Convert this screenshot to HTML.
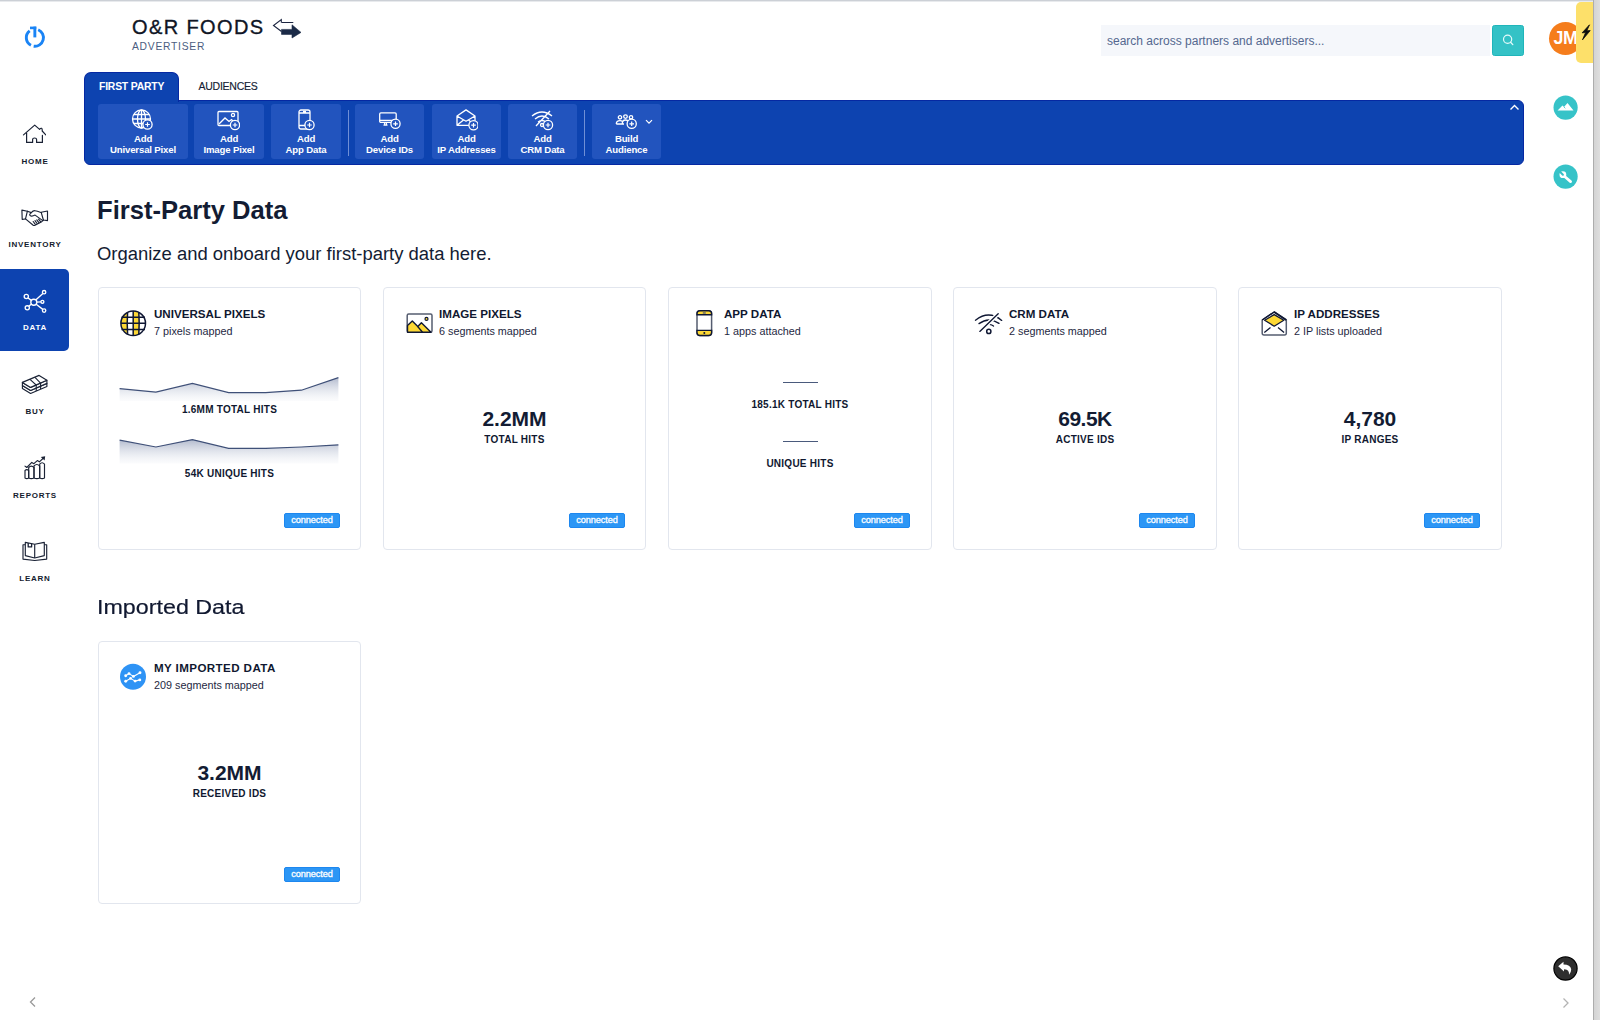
<!DOCTYPE html>
<html><head><meta charset="utf-8">
<style>
*{box-sizing:border-box;margin:0;padding:0}
html,body{width:1600px;height:1020px;overflow:hidden;background:#fff;font-family:"Liberation Sans",sans-serif;color:#131c33}
.abs{position:absolute}
#topline{left:0;top:0;width:1600px;height:2px;background:linear-gradient(#ccd0d6 0,#ccd0d6 1px,#e8eaed 1px)}
#rbar{left:1593px;top:0;width:7px;height:1020px;background:linear-gradient(90deg,#d4d4d4,#dedede);border-left:1px solid #adadad}
.nav{left:0;width:69px;text-align:center;font-size:8px;font-weight:bold;letter-spacing:1.3px;color:#1a2235}
.navlbl{position:absolute;left:0;width:69px;text-align:center;font-size:8px;font-weight:bold;letter-spacing:0.75px;color:#141b2e;padding-left:1px}
#brand{left:132px;top:16px;font-size:20px;letter-spacing:1.4px;color:#0f1525;-webkit-text-stroke:0.35px #0f1525}
#adv{left:132px;top:41px;font-size:10.3px;letter-spacing:0.75px;color:#4b5d7f}
#search{left:1101px;top:25px;width:389px;height:31px;background:#f5f7fb;font-size:12px;color:#54688f;padding:8.5px 0 0 6px}
#sbtn{left:1492px;top:25px;width:31px;height:31px;background:#34bfc4}
#tab1{left:84px;top:72px;width:95px;height:30px;background:#0d43b0;border:1px solid #0528a2;border-bottom:none;border-radius:7px 7px 0 0;color:#fff;font-size:10.4px;font-weight:bold;padding:8px 0 0 14px;letter-spacing:-0.2px}
#tab2{left:198.5px;top:80px;font-size:10.5px;color:#141c33;letter-spacing:-0.25px;-webkit-text-stroke:0.15px #141c33}
#bar{left:84px;top:100px;width:1440px;height:65px;background:#0d43b0;border:1px solid #0528a2;border-radius:0 6px 6px 6px}
.btn{position:absolute;top:104px;height:55px;background:#2254be;border-radius:3px;color:#fff;font-size:9.6px;font-weight:bold;text-align:center;line-height:10.7px;letter-spacing:-0.15px}
.btn .t{position:absolute;left:0;right:0;top:30px}
.sep{position:absolute;top:110px;width:1px;height:46px;background:#6f8fd6}
h1{position:absolute;left:97px;top:196px;font-size:25.6px;font-weight:bold;color:#131c33}
#sub{left:97px;top:243px;font-size:18.45px;color:#131c33}
h2{position:absolute;left:97px;top:595px;font-size:20.5px;font-weight:normal;color:#101830;transform:scaleX(1.135);transform-origin:0 0;-webkit-text-stroke:0.2px #101830}
.card{position:absolute;width:263px;height:263px;border:1px solid #e2e6ee;border-radius:4px;background:#fff}
.ct{position:absolute;left:55px;top:19px;font-size:11.6px;font-weight:bold;color:#101830;letter-spacing:0px}
.cs{position:absolute;left:55px;top:37px;font-size:10.8px;color:#1e2842}
.big{position:absolute;left:0;right:0;text-align:center;font-size:21px;font-weight:bold;color:#131c33}
.lbl{position:absolute;left:0;right:0;text-align:center;font-size:10px;font-weight:bold;color:#101830;letter-spacing:0.25px}
.conn{position:absolute;left:185px;top:225px;width:56px;height:15px;background:#2c96f5;border:1px solid #1d87ef;color:#fff;font-size:9.2px;font-weight:normal;-webkit-text-stroke:0.3px #fff;letter-spacing:-0.1px;text-align:center;line-height:13px;border-radius:2px}
</style></head><body>
<div id="topline" class="abs"></div>
<div id="rbar" class="abs"></div>


<!-- sidebar -->
<svg class="abs" style="left:22px;top:24px" width="26" height="26" viewBox="0 0 26 26">
<g fill="none" stroke="#1a84f5" stroke-width="2.9">
<path d="M7.7 6.86 A8.6 8.6 0 0 0 8.94 21.33"/>
<path d="M16.2 5.76 A8.6 8.6 0 0 1 11.67 22.2"/>
</g>
<rect x="11.4" y="2.6" width="2.9" height="10.8" fill="#1a84f5"/>
<rect x="8" y="2.6" width="6.3" height="2.6" fill="#1a84f5"/>
</svg>
<svg class="abs" style="left:22px;top:123px" width="24" height="21" viewBox="0 0 24 21">
<g fill="none" stroke="#1a2235" stroke-width="1.2" stroke-linejoin="round" stroke-linecap="round">
<path d="M1.5 11.9 L12.7 2.1 L17.6 6.4 Q18.5 5 19.6 5.3 Q20.4 5.8 20.2 8 L23.8 11.9"/>
<path d="M4.6 10 V19.4 H10.6 V16.6 Q10.6 15 12.6 15 Q14.6 15 14.6 16.6 V19.4 H20.4 V12.4"/>
</g></svg>
<div class="navlbl" style="top:157px">HOME</div>
<svg class="abs" style="left:20px;top:208px" width="30" height="20" viewBox="0 0 30 20">
<g fill="none" stroke="#1a2235" stroke-width="1.15" stroke-linejoin="round" stroke-linecap="round">
<path d="M1.9 2.1 L7.4 3.2 L5.5 10.9 L2.2 11.5 Z"/>
<path d="M21.2 4.3 L27.5 3 V12.6 L23.4 12 Z"/>
<path d="M7.4 3.2 L11.3 4.6 Q13 2.6 14.9 2.7 Q17 3 20.9 4.5"/>
<path d="M5.5 10.9 L13.2 17.2 Q14 17.8 15 17.3 L21.7 13.7 L23.4 12"/>
<path d="M11.3 4.6 Q9 6.3 10 7.4 Q11.5 9 15.1 7.1 L22.8 12.6"/>
<path d="M13.2 13.5 L15.3 16.3 M15.0 12.7 L17.1 15.5 M16.8 11.9 L18.9 14.7 M18.6 11.1 L20.7 13.9"/>
</g></svg>
<div class="navlbl" style="top:240px">INVENTORY</div>
<div class="abs" style="left:0;top:269px;width:69px;height:82px;background:#0d43b0;border-radius:0 5px 5px 0"></div>
<svg class="abs" style="left:22px;top:289px" width="26" height="25" viewBox="0 0 26 25">
<g fill="none" stroke="#fff" stroke-width="1.35">
<circle cx="11.8" cy="13.2" r="3"/><circle cx="4.3" cy="7.5" r="2.1"/><circle cx="5.3" cy="18.8" r="2.1"/><circle cx="22.1" cy="3.2" r="1.7"/><circle cx="20.4" cy="12.8" r="1.5"/><circle cx="22.1" cy="21.6" r="1.7"/>
<path d="M6 9 L9.4 11.4 M6.8 17.3 L9.5 15.1 M20.9 4.5 L14 10.8 M18.9 12.9 L14.8 13.1 M20.8 20.4 L14.2 15.2"/>
</g></svg>
<div class="navlbl" style="top:323px;color:#fff">DATA</div>
<svg class="abs" style="left:20px;top:373px" width="29" height="24" viewBox="0 0 29 24">
<g fill="#fff" stroke="#1a2235" stroke-width="1.15" stroke-linejoin="round">
<path d="M2.4 15.5 L10.6 20.5 L26.9 13.5 L26.9 10.4 L10.6 17.5 L2.4 12.5 Z"/>
<path d="M2.4 12.5 L10.6 17.5 L26.9 10.4 L26.9 7.3 L10.6 14.4 L2.4 9.4 Z"/>
<path d="M2.4 9.4 L19.1 2.4 L26.9 7.3 L10.6 14.4 Z"/>
</g>
<g fill="none" stroke="#1a2235" stroke-width="1.1">
<path d="M10 6.3 L16.2 12 V18 M15 4.3 L20.6 10.2 V16"/>
</g></svg>
<div class="navlbl" style="top:407px">BUY</div>
<svg class="abs" style="left:20px;top:452px" width="28" height="28" viewBox="0 0 28 28">
<g fill="none" stroke="#1a2235" stroke-width="1.15" stroke-linejoin="round">
<path d="M5 26 V18.5 Q6.8 16.8 8.7 18.5 V26 Q6.8 27.3 5 26 Z"/>
<path d="M8.7 26 V15.5 Q11.3 12.6 14 15.5 V26 Q11.3 27.3 8.7 26"/>
<path d="M14 26 V14 Q16.8 11 19.7 14 V26 Q16.8 27.3 14 26"/>
<path d="M19.7 26 V12.2 Q22.1 9.2 24.5 12.2 V26 Q22.1 27.3 19.7 26"/>
<path d="M5 14.1 L6.8 15.5 L11.8 10.4 L13.9 11.7 L17.3 8.6 L19.4 9.8 L23.5 6" stroke-linecap="round"/>
</g>
<path d="M25.2 4.3 L20.8 4.9 L24.6 8.6 Z" fill="#1a2235"/>
</svg>
<div class="navlbl" style="top:491px">REPORTS</div>
<svg class="abs" style="left:20px;top:537px" width="30" height="26" viewBox="0 0 30 26">
<g fill="none" stroke="#1a2235" stroke-width="1.15" stroke-linejoin="round">
<path d="M5.3 7.7 H3 V22.1 L14.7 23.5 L26.7 22.1 V7.7 H24.3"/>
<path d="M5.3 5.4 L14.7 7.2 L24.3 5.4 V18.6 L14.7 21 L5.3 18.6 Z"/>
<path d="M14.7 7.2 V21"/>
<path d="M8.2 6 V9.9 H11.6 V6.6" stroke-width="1.3"/>
</g></svg>
<div class="navlbl" style="top:574px">LEARN</div>
<svg class="abs" style="left:28px;top:996px" width="10" height="12" viewBox="0 0 10 12"><path d="M7 1.5 L2.5 6 L7 10.5" fill="none" stroke="#9a9a9a" stroke-width="1.3"/></svg>


<!-- right rail -->
<svg class="abs" style="left:1492px;top:25px" width="32" height="31" viewBox="0 0 32 31">
<rect x="0.5" y="0.5" width="31" height="30" rx="2" fill="#34c2c6" stroke="#1fb5ba" stroke-width="1"/>
<circle cx="15.6" cy="14.3" r="4.1" fill="none" stroke="#e6fafa" stroke-width="1.2"/>
<path d="M18.6 17.3 L20.8 19.6" stroke="#e6fafa" stroke-width="1.3" stroke-linecap="round"/>
</svg>
<div class="abs" style="left:1548.5px;top:21.5px;width:33px;height:33px;border-radius:50%;background:#f57d1c;color:#fff;font-weight:bold;font-size:18px;line-height:32px;padding-left:5px;letter-spacing:-0.6px;overflow:hidden;white-space:nowrap">JM</div>
<div class="abs" style="left:1576px;top:2px;width:17px;height:61px;background:#fde06a;border-radius:5px 0 0 5px"></div>
<svg class="abs" style="left:1581px;top:24px" width="10" height="17" viewBox="0 0 10 17"><path d="M8.5 0.8 L1.2 8.8 L4.6 8.6 L1.5 15.8 L9.2 6.6 L5.8 6.8 Z" fill="#0d0d0d" stroke="#0d0d0d" stroke-width="0.8" stroke-linejoin="round"/></svg>
<svg class="abs" style="left:1553px;top:95px" width="25" height="25" viewBox="0 0 25 25">
<circle cx="12.6" cy="12.6" r="12.1" fill="#36c3c8"/>
<path d="M4.5 15.5 L9.5 10.5 L11 12 L14.5 8 L20.5 15.5 Z" fill="#fff"/>
<path d="M11 12 L12.3 13.3" stroke="#35c1c6" stroke-width="0.8"/>
</svg>
<svg class="abs" style="left:1553px;top:164px" width="25" height="25" viewBox="0 0 25 25">
<circle cx="12.6" cy="12.6" r="12.1" fill="#36c3c8"/>
<path d="M10.8 11.8 L17.6 17.6" stroke="#fff" stroke-width="2.7" stroke-linecap="round"/><circle cx="9.9" cy="10.7" r="3.4" fill="#fff"/><path d="M9.9 10.7 L7 7.8" stroke="#35c1c6" stroke-width="2" stroke-linecap="round"/>
</svg>
<svg class="abs" style="left:1553px;top:956px" width="25" height="25" viewBox="0 0 25 25">
<circle cx="12.5" cy="12.5" r="11.6" fill="#2f2f2f" stroke="#000" stroke-width="1.2"/>
<path d="M5.2 10.3 L10.5 5.8 L10.5 8.5 Q17.5 8.5 18.2 13.3 Q18.3 16.3 16 18.8 Q16.5 13.3 11.5 13.2 Q10.8 13.3 11 13.5 L11 15.5 Z" fill="#fff"/>
</svg>
<svg class="abs" style="left:1560px;top:996px" width="12" height="14" viewBox="0 0 12 14"><path d="M3.5 2.5 L8 7 L3.5 11.5" fill="none" stroke="#b3b3b3" stroke-width="1.3"/></svg>
<!-- brand arrow -->
<svg class="abs" style="left:272px;top:18px" width="32" height="22" viewBox="0 0 32 22">
<path d="M9.5 4.5 H21.3 M9.3 4.6 V1.5 L1.5 7.5 L9.5 13.5" fill="none" stroke="#1b2440" stroke-width="1.1" stroke-linejoin="miter"/>
<path d="M9.5 11.4 H20 V6.8 L29 14.4 L20 20 V16.4 H9.5 Z" fill="#1b2a47" stroke="#1b2a47" stroke-width="0.6" stroke-linejoin="round"/>
</svg>

<!-- brand -->
<div id="brand" class="abs">O&amp;R FOODS</div>
<div id="adv" class="abs">ADVERTISER</div>

<div id="search" class="abs">search across partners and advertisers...</div>


<div id="bar" class="abs"></div>
<div id="tab1" class="abs">FIRST PARTY</div>
<div id="tab2" class="abs">AUDIENCES</div>
<div class="abs" style="left:85px;top:99px;width:93px;height:3px;background:#0d43b0"></div>
<div class="btn" style="left:98px;width:90px"><svg style="position:absolute;left:33px;top:5px" width="23" height="22" viewBox="0 0 23 22"><g stroke="#fff" stroke-width="1.3" fill="none"><circle cx="10.5" cy="10" r="9"/><ellipse cx="10.5" cy="10" rx="4" ry="9"/><path d="M10.5 1 V19 M1.5 10 H19.5 M2.8 5.5 H18.2 M2.8 14.5 H18.2"/></g><circle cx="16.5" cy="15.5" r="4.6" fill="#2254be" stroke="#fff" stroke-width="1.3"/><path d="M16.5 13.2 V17.8 M14.2 15.5 H18.8" stroke="#fff" stroke-width="1.2"/></svg><div class="t">Add<br>Universal Pixel</div></div>
<div class="btn" style="left:194px;width:70px"><svg style="position:absolute;left:23px;top:5px" width="23" height="22" viewBox="0 0 23 22"><g stroke="#fff" stroke-width="1.3" fill="none"><rect x="1" y="2.5" width="20" height="14" rx="1"/><path d="M2 15 L8 9 L12 12.5 L14.5 10.5 L18 14"/><circle cx="16" cy="6" r="1.6"/></g><circle cx="18" cy="16" r="4.6" fill="#2254be" stroke="#fff" stroke-width="1.3"/><path d="M18 13.7 V18.3 M15.7 16 H20.3" stroke="#fff" stroke-width="1.2"/></svg><div class="t">Add<br>Image Pixel</div></div>
<div class="btn" style="left:271px;width:70px"><svg style="position:absolute;left:23px;top:5px" width="23" height="22" viewBox="0 0 23 22"><g stroke="#fff" stroke-width="1.3" fill="none"><rect x="5" y="1" width="11" height="19" rx="2"/><path d="M5 4 H16 M5 16.5 H16 M9 2.5 H12"/></g><circle cx="15.5" cy="16" r="4.6" fill="#2254be" stroke="#fff" stroke-width="1.3"/><path d="M15.5 13.7 V18.3 M13.2 16 H17.8" stroke="#fff" stroke-width="1.2"/></svg><div class="t">Add<br>App Data</div></div>
<div class="btn" style="left:355px;width:69px"><svg style="position:absolute;left:23px;top:5px" width="23" height="22" viewBox="0 0 23 22"><g stroke="#fff" stroke-width="1.3" fill="none"><rect x="1.7" y="3.8" width="16.5" height="9.6" rx="1.2"/><path d="M2 11.3 H17.5 M5.5 16.2 H9.5 M6.6 13.6 V16 M8.4 13.6 V16"/></g><circle cx="17.5" cy="14.8" r="4.6" fill="#2254be" stroke="#fff" stroke-width="1.3"/><path d="M17.5 12.5 V17.1 M15.2 14.8 H19.8" stroke="#fff" stroke-width="1.2"/></svg><div class="t">Add<br>Device IDs</div></div>
<div class="btn" style="left:432px;width:69px"><svg style="position:absolute;left:23px;top:5px" width="23" height="22" viewBox="0 0 23 22"><g stroke="#fff" stroke-width="1.3" fill="none" stroke-linejoin="round"><path d="M2 7 L11 0.9 L20 7 V16.3 H2 Z M2 7 L11 12.2 L20 7 M2 16.3 L8.5 11 M20 16.3 L13.5 11"/></g><circle cx="18.5" cy="16.2" r="4.6" fill="#2254be" stroke="#fff" stroke-width="1.3"/><path d="M18.5 13.899999999999999 V18.5 M16.2 16.2 H20.8" stroke="#fff" stroke-width="1.2"/></svg><div class="t">Add<br>IP Addresses</div></div>
<div class="btn" style="left:508px;width:69px"><svg style="position:absolute;left:23px;top:5px" width="23" height="22" viewBox="0 0 23 22"><g stroke="#fff" stroke-width="1.3" fill="none"><path d="M1 7 Q11 -1 21 7 M4 10 Q11 4 18 10 M7 13 Q11 10 15 13 M5 17 L19 2"/><circle cx="11" cy="16" r="1.5"/></g><circle cx="17" cy="16" r="4.6" fill="#2254be" stroke="#fff" stroke-width="1.3"/><path d="M17 13.7 V18.3 M14.7 16 H19.3" stroke="#fff" stroke-width="1.2"/></svg><div class="t">Add<br>CRM Data</div></div>
<div class="btn" style="left:592px;width:69px"><svg style="position:absolute;left:23px;top:5px" width="23" height="22" viewBox="0 0 23 22"><g stroke="#fff" stroke-width="1.3" fill="none"><circle cx="5" cy="8.3" r="1.7"/><circle cx="10.5" cy="7.6" r="1.8"/><circle cx="16" cy="8.3" r="1.7"/><path d="M1.3 15 Q1.3 11.6 5 11.6 Q6.6 11.6 7.5 12.4 M7.3 14.6 Q7.3 11 10.5 11 Q13.7 11 13.7 14.6 M13.5 12.4 Q14.4 11.6 16 11.6 Q19.7 11.6 19.7 15 M1.3 15 H9"/></g><circle cx="16.7" cy="14.8" r="4.6" fill="#2254be" stroke="#fff" stroke-width="1.3"/><path d="M16.7 12.5 V17.1 M14.399999999999999 14.8 H19.0" stroke="#fff" stroke-width="1.2"/></svg><div class="t">Build<br>Audience</div></div>
<div class="sep" style="left:348px"></div><div class="sep" style="left:584px"></div>
<svg class="abs" style="left:645px;top:119px" width="8" height="6" viewBox="0 0 8 6"><path d="M1 1.2 L4 4.2 L7 1.2" fill="none" stroke="#fff" stroke-width="1.2"/></svg>
<svg class="abs" style="left:1509px;top:103.5px" width="11" height="7" viewBox="0 0 11 7"><path d="M1.5 5.5 L5.5 1.5 L9.5 5.5" fill="none" stroke="#fff" stroke-width="1.4"/></svg>


<h1>First-Party Data</h1>
<div id="sub" class="abs">Organize and onboard your first-party data here.</div>

<div class="card" style="left:98px;top:287px">
  <svg style="position:absolute;left:21px;top:22px" width="28" height="28" viewBox="0 0 28 28">
<defs><clipPath id="gc"><circle cx="13.2" cy="13.3" r="12.3"/></clipPath></defs>
<g clip-path="url(#gc)"><rect x="0" y="0" width="28" height="28" fill="#fff"/><rect x="0" y="0" width="7.3" height="28" fill="#fdd835"/><rect x="13.2" y="0" width="5.9" height="28" fill="#fdd835"/></g>
<g fill="none" stroke="#0f1733" stroke-width="1.5"><circle cx="13.2" cy="13.3" r="12.3"/><path d="M7.6 2 Q6.8 13.3 7.6 24.6 M13.2 1 V25.6 M18.8 2 Q19.6 13.3 18.8 24.6 M1.5 7.2 H25 M1 13.3 H25.5 M1.5 19.6 H25"/></g></svg><svg style="position:absolute;left:0;top:0" width="262" height="262"><defs><linearGradient id="g1" x1="0" y1="0" x2="0" y2="1"><stop offset="0" stop-color="#9ea8c0" stop-opacity="0.8"/><stop offset="1" stop-color="#e4e8f0" stop-opacity="0.15"/></linearGradient></defs><path d="M20.6,100.6 L56.9,104.2 L93.4,95.4 L129.6,104.7 L166.7,104.7 L202.4,102.2 L239.4,89.6 L239.4,113 L20.6,113 Z" fill="url(#g1)"/><polyline points="20.6,100.6 56.9,104.2 93.4,95.4 129.6,104.7 166.7,104.7 202.4,102.2 239.4,89.6" fill="none" stroke="#3f5078" stroke-width="1.2"/></svg><svg style="position:absolute;left:0;top:0" width="262" height="262"><defs><linearGradient id="g2" x1="0" y1="0" x2="0" y2="1"><stop offset="0" stop-color="#9ea8c0" stop-opacity="0.8"/><stop offset="1" stop-color="#e4e8f0" stop-opacity="0.15"/></linearGradient></defs><path d="M20.6,152.2 L56.9,159.0 L93.4,151.6 L129.6,160.4 L166.7,160.4 L202.4,159.0 L239.4,156.8 L239.4,175.5 L20.6,175.5 Z" fill="url(#g2)"/><polyline points="20.6,152.2 56.9,159.0 93.4,151.6 129.6,160.4 166.7,160.4 202.4,159.0 239.4,156.8" fill="none" stroke="#3f5078" stroke-width="1.2"/></svg><div class="ct">UNIVERSAL PIXELS</div><div class="lbl" style="top:116px">1.6MM TOTAL HITS</div><div class="lbl" style="top:180px">54K UNIQUE HITS</div><div class="cs">7 pixels mapped</div>
  <div class="conn">connected</div>
</div>
<div class="card" style="left:383px;top:287px">
  <svg style="position:absolute;left:22px;top:25px" width="28" height="22" viewBox="0 0 28 22">
<rect x="1.2" y="1.1" width="24.8" height="18.2" rx="1.5" fill="#fff" stroke="#555d70" stroke-width="1.5"/>
<path d="M1.5 12.5 L6.3 8 L11.8 13.6 L15.4 9.8 L25 19.3 L1.5 19.3 Z" fill="#fdd835" stroke="#0f1733" stroke-width="1.4" stroke-linejoin="round"/>
<path d="M11.8 13.6 L16.5 19.3" stroke="#0f1733" stroke-width="1.4"/>
<circle cx="20.5" cy="5.9" r="1.5" fill="#fdd835" stroke="#0f1733" stroke-width="1.2"/></svg><div class="ct">IMAGE PIXELS</div><div class="cs">6 segments mapped</div>
  <div class="big" style="top:119px">2.2MM</div><div class="lbl" style="top:146px">TOTAL HITS</div>
  <div class="conn">connected</div>
</div>
<div class="card" style="left:668px;top:287px;width:264px">
  <svg style="position:absolute;left:27px;top:22px" width="17" height="28" viewBox="0 0 17 28">
<rect x="1" y="0.8" width="14.6" height="24.7" rx="3" fill="#fff" stroke="#555d70" stroke-width="1.5"/>
<path d="M1 3.8 Q1 0.8 4 0.8 H12.6 Q15.6 0.8 15.6 3.8 V4.8 H1 Z" fill="#fdd835" stroke="#0f1733" stroke-width="1.4"/>
<path d="M1 20.4 H15.6 V22.5 Q15.6 25.5 12.6 25.5 H4 Q1 25.5 1 22.5 Z" fill="#fdd835" stroke="#0f1733" stroke-width="1.4"/>
<rect x="6.8" y="2.3" width="3" height="1.3" fill="#555d70"/><circle cx="8.3" cy="23" r="1" fill="#0f1733"/></svg><div class="ct">APP DATA</div><div style="position:absolute;left:114px;top:94px;width:35px;height:1px;background:#4a5a7c"></div><div class="lbl" style="top:111px">185.1K TOTAL HITS</div><div style="position:absolute;left:114px;top:153px;width:35px;height:1px;background:#4a5a7c"></div><div class="lbl" style="top:170px">UNIQUE HITS</div><div class="cs">1 apps attached</div>
  <div class="conn">connected</div>
</div>
<div class="card" style="left:953px;top:287px;width:264px">
  <svg style="position:absolute;left:20px;top:24px" width="30" height="24" viewBox="0 0 30 24">
<defs><mask id="wm"><rect width="30" height="24" fill="#fff"/><path d="M5.8 19.4 L24.2 1.8" stroke="#000" stroke-width="4.2"/></mask></defs>
<g fill="none" stroke="#0f1733" stroke-width="1.35" stroke-linecap="round">
<g mask="url(#wm)">
<path d="M1.5 8.2 Q14.8 -2.2 27.7 8.4"/>
<path d="M5 11.6 Q14.8 4.4 25 11.4"/>
<path d="M15.5 12.4 Q18 12.8 19.5 14"/>
</g>
<path d="M5.8 19.4 L24.2 1.8"/>
<circle cx="14.8" cy="19.4" r="2.1" stroke-width="1.5"/></g></svg><div class="ct">CRM DATA</div><div class="cs">2 segments mapped</div>
  <div class="big" style="top:119px;letter-spacing:-0.5px">69.5K</div><div class="lbl" style="top:146px">ACTIVE IDS</div>
  <div class="conn">connected</div>
</div>
<div class="card" style="left:1238px;top:287px;width:264px">
  <svg style="position:absolute;left:22px;top:23px" width="28" height="26" viewBox="0 0 28 26">
<path d="M1.2 9 L13.2 1 L25.3 9 V22.3 Q25.3 24 23.5 24 H3 Q1.2 24 1.2 22.3 Z" fill="#fff" stroke="#555d70" stroke-width="1.5" stroke-linejoin="round"/>
<path d="M1.2 9 L13.2 1 L25.3 9" fill="none" stroke="#0f1733" stroke-width="1.5" stroke-linejoin="round"/>
<path d="M3.6 9.3 L13.2 3.6 L22.8 9.3 L13.2 15.2 Z" fill="#fdd835" stroke="#0f1733" stroke-width="1.3" stroke-linejoin="round"/>
<path d="M3.3 21.4 L9.5 16.5 M23.1 21.4 L17 16.5" stroke="#0f1733" stroke-width="1.3"/></svg><div class="ct">IP ADDRESSES</div><div class="cs">2 IP lists uploaded</div>
  <div class="big" style="top:119px">4,780</div><div class="lbl" style="top:146px">IP RANGES</div>
  <div class="conn">connected</div>
</div>

<h2>Imported Data</h2>
<div class="card" style="left:98px;top:641px">
  <svg style="position:absolute;left:20px;top:21px" width="28" height="28" viewBox="0 0 28 28">
<circle cx="14" cy="13.8" r="13" fill="#2e93f5"/>
<g fill="none" stroke="#fff" stroke-width="1.1" stroke-linejoin="round"><path d="M6.7 12.8 L10 10.6 L14.4 13.4 L21 9.7 M6.7 18.3 L11.6 15.4 L16.1 18.1 L20.8 16.9"/></g>
<g fill="#fff"><circle cx="6.7" cy="12.8" r="1.45"/><circle cx="10" cy="10.6" r="1.45"/><circle cx="14.4" cy="13.4" r="1.45"/><circle cx="21" cy="9.7" r="1.45"/><circle cx="6.7" cy="18.3" r="1.45"/><circle cx="11.6" cy="15.4" r="1.45"/><circle cx="16.1" cy="18.1" r="1.45"/><circle cx="20.8" cy="16.9" r="1.45"/></g></svg><div class="ct" style="letter-spacing:0.4px">MY IMPORTED DATA</div><div class="cs">209 segments mapped</div>
  <div class="big" style="top:119px">3.2MM</div><div class="lbl" style="top:146px">RECEIVED IDS</div>
  <div class="conn">connected</div>
</div>

</body></html>
